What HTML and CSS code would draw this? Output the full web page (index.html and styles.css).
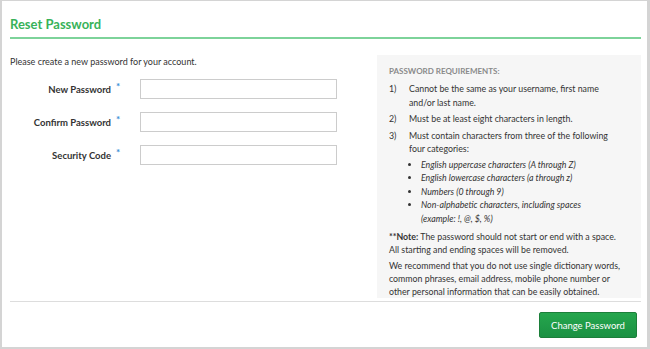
FILE: index.html
```html
<!DOCTYPE html>
<html lang="en">

<head>
    <meta charset="UTF-8">
    <meta name="viewport" content="width=device-width, initial-scale=1.0">
    <title>Reset Password</title>
    <link rel="stylesheet" href="styles.css">
</head>

<body>
    <div class="panel">
        <h1 class="title">Reset Password</h1>
        <div class="content">
            <div class="form-side">
                <p class="intro">Please create a new password for your account.</p>
                <div class="field">
                    <label>New Password</label>
                    <span class="req">*</span>
                    <input type="password">
                </div>
                <div class="field">
                    <label>Confirm Password</label>
                    <span class="req">*</span>
                    <input type="password">
                </div>
                <div class="field">
                    <label>Security Code</label>
                    <span class="req">*</span>
                    <input type="text">
                </div>
            </div>
            <aside class="rules">
                <h2>Password Requirements:</h2>
                <ol>
                    <li><span class="num">1)</span><span>Cannot be the same as your username, first name and/or last name.</span></li>
                    <li><span class="num">2)</span><span>Must be at least eight characters in length.</span></li>
                    <li><span class="num">3)</span><span>Must contain characters from three of the following four categories:</span></li>
                </ol>
                <ul class="cats">
                    <li>English uppercase characters (A through Z)</li>
                    <li>English lowercase characters (a through z)</li>
                    <li>Numbers (0 through 9)</li>
                    <li>Non-alphabetic characters, including spaces (example: !, @, $, %)</li>
                </ul>
                <p class="note"><strong>**Note:</strong> The password should not start or end with a space. All starting and ending spaces will be removed.</p>
                <p>We recommend that you do not use single dictionary words, common phrases, email address, mobile phone number or other personal information that can be easily obtained.</p>
            </aside>
        </div>
        <div class="footer">
            <button class="submit">Change Password</button>
        </div>
    </div>
</body>

</html>
```

FILE: styles.css
```css
* {
    box-sizing: border-box;
}

body {
    margin: 0;
    font-family: Lato, "Open Sans", sans-serif;
    color: #333;
    background: #fff;
}

.panel {
    width: 650px;
    height: 349px;
    border: 1px solid #d4d4d4;
    border-width: 1px 3px 2px 2px;
    padding: 0 6px 0 8px;
}

.title {
    margin: 0;
    padding: 15px 0 5px;
    font-size: 13px;
    line-height: 16px;
    font-weight: 700;
    color: #38b259;
    border-bottom: 2px solid #7dd39a;
}

.content {
    display: flex;
    justify-content: space-between;
    padding: 16px 0 3px;
    border-bottom: 1px solid #ddd;
}

.form-side {
    width: 340px;
}

.intro {
    margin: 1px 0 11px;
    font-size: 9px;
    line-height: 12px;
}

.field {
    display: flex;
    align-items: center;
    margin-bottom: 13px;
}

.field label {
    width: 101px;
    text-align: right;
    font-size: 9.5px;
    font-weight: 700;
    color: #333;
    white-space: nowrap;
}

.req {
    width: 29px;
    padding-left: 5px;
    color: #3d8fd6;
    font-size: 10px;
    font-weight: 700;
    align-self: flex-start;
    line-height: 12px;
    margin-top: 1px;
}

.field input {
    width: 197px;
    height: 20px;
    border: 1px solid #ccc;
    padding: 2px 4px;
    font-size: 10px;
}

.rules {
    width: 264px;
    height: 243px;
    background: #f6f6f6;
    padding: 11px 14px 0 12px;
    font-size: 8.8px;
    line-height: 13.5px;
    color: #333;
}

.rules h2 {
    margin: 0 0 6px;
    font-size: 8px;
    line-height: 10px;
    font-weight: 700;
    color: #8a8a8a;
    text-transform: uppercase;
}

.rules ol {
    list-style: none;
    margin: 0 10px 0 0;
    padding: 0;
}

.rules ol li {
    display: flex;
    margin-bottom: 3px;
}

.num {
    width: 20px;
    flex-shrink: 0;
}

.cats {
    margin: -1px 10px 5px 0;
    padding-left: 32px;
    font-style: italic;
    list-style: disc;
}

.rules p {
    margin: 0 0 3px;
    line-height: 13px;
}

.rules .note {
    margin-right: 6px;
}

.footer {
    display: flex;
    justify-content: flex-end;
    padding: 10px 4px 0 0;
}

.submit {
    width: 98px;
    height: 26px;
    border: 1px solid #1c7f3a;
    border-radius: 2px;
    background: linear-gradient(#25a64d, #1b9143);
    color: #fff;
    font-family: Lato, sans-serif;
    font-size: 9.5px;
}
```
